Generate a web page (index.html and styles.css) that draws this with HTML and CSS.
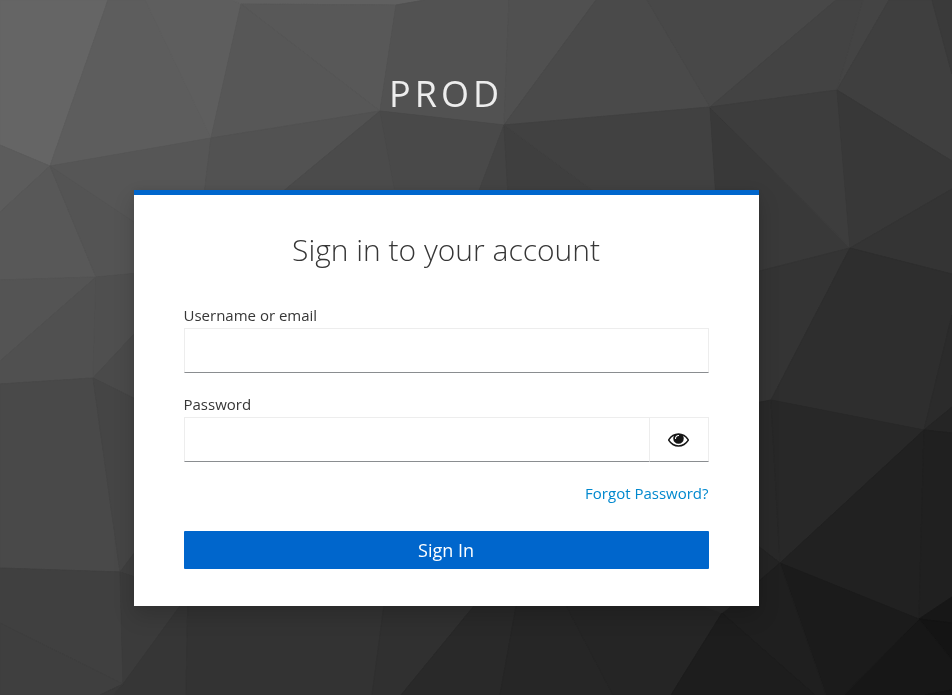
FILE: index.html
```html
<!DOCTYPE html>
<html lang="en">
<head>
<meta charset="utf-8">
<title>Sign in to PROD</title>
<meta name="viewport" content="width=device-width, initial-scale=1">
<link rel="stylesheet" href="styles.css">
</head>
<body>
<svg class="backdrop" viewBox="0 0 952 695" preserveAspectRatio="xMidYMid slice" aria-hidden="true">
  <!-- top row -->
  <polygon color="#656565" points="0,0 108,0 50,166 0,145"/>
  <polygon color="#5d5d5d" points="108,0 145,0 211,138 50,166"/>
  <polygon color="#5e5e5e" points="145,0 232,0 241,4 211,138"/>
  <polygon color="#606060" points="232,0 425,0 396,5 241,4"/>
  <polygon color="#585858" points="241,4 396,5 380,111"/>
  <polygon color="#575757" points="241,4 380,111 211,138"/>
  <polygon color="#525252" points="396,5 425,0 509,0 504,125 380,111"/>
  <polygon color="#505050" points="509,0 596,0 504,125"/>
  <polygon color="#4a4a4a" points="596,0 647,0 710,107 504,125"/>
  <polygon color="#484848" points="647,0 836,0 710,107"/>
  <polygon color="#434343" points="836,0 863,0 837,90 710,107"/>
  <polygon color="#444444" points="863,0 889,0 837,90"/>
  <polygon color="#3f3f3f" points="889,0 932,0 952,74 952,161 837,90"/>
  <polygon color="#3a3a3a" points="932,0 952,0 952,74"/>
  <!-- behind the card's upper edge -->
  <polygon color="#565656" points="50,166 211,138 196,260 134,222"/>
  <polygon color="#525252" points="211,138 380,111 240,227 196,260"/>
  <polygon color="#4b4b4b" points="380,111 402,230 240,227"/>
  <polygon color="#494949" points="380,111 504,125 464,230 402,230"/>
  <polygon color="#434343" points="504,125 464,230 510,230"/>
  <polygon color="#3f3f3f" points="504,125 510,230 646,230"/>
  <polygon color="#414141" points="504,125 710,107 718,230 646,230"/>
  <polygon color="#393939" points="710,107 850,248 759,271 718,230"/>
  <polygon color="#3d3d3d" points="710,107 837,90 850,248"/>
  <polygon color="#383838" points="837,90 952,161 952,189 850,248"/>
  <!-- left side -->
  <polygon color="#5c5c5c" points="0,145 50,166 0,212"/>
  <polygon color="#585858" points="0,212 50,166 96,277 0,280"/>
  <polygon color="#545454" points="50,166 134,222 150,272 96,277"/>
  <polygon color="#545454" points="0,280 96,277 0,361"/>
  <polygon color="#505050" points="0,361 96,277 93,378 0,384"/>
  <polygon color="#4f4f4f" points="96,277 150,272 150,317 93,378"/>
  <polygon color="#4a4a4a" points="93,378 150,317 150,406"/>
  <polygon color="#494949" points="0,384 93,378 120,572 0,568"/>
  <polygon color="#454545" points="93,378 150,406 150,532 120,572"/>
  <polygon color="#3f3f3f" points="120,572 150,532 150,582"/>
  <polygon color="#404040" points="0,568 120,572 123,684 0,623"/>
  <polygon color="#3f3f3f" points="0,623 123,684 100,695 0,695"/>
  <polygon color="#3b3b3b" points="120,572 150,582 195,585 123,684"/>
  <polygon color="#363636" points="123,684 188,595 186,695 113,695"/>
  <polygon color="#393939" points="123,684 113,695 100,695"/>
  <!-- right side -->
  <polygon color="#343434" points="850,248 952,189 952,274"/>
  <polygon color="#343434" points="740,276 850,248 771,400 740,406"/>
  <polygon color="#2e2e2e" points="850,248 952,274 952,315 924,430 771,400"/>
  <polygon color="#2b2b2b" points="952,315 952,407 924,430"/>
  <polygon color="#252525" points="924,430 952,407 952,433"/>
  <polygon color="#292929" points="740,406 771,400 780,563 740,532"/>
  <polygon color="#282828" points="771,400 924,430 780,563"/>
  <polygon color="#212121" points="924,430 919,619 780,563"/>
  <polygon color="#202020" points="924,430 952,433 952,597 919,619"/>
  <polygon color="#242424" points="740,532 780,563 740,597"/>
  <polygon color="#171717" points="919,619 952,597 952,623"/>
  <polygon color="#141414" points="919,619 952,623 952,660"/>
  <polygon color="#171717" points="919,619 952,660 952,690 925,695 844,695"/>
  <polygon color="#141414" points="952,690 952,695 925,695"/>
  <polygon color="#1b1b1b" points="780,563 919,619 844,695 826,695"/>
  <polygon color="#1f1f1f" points="780,563 826,695 815,695 722,613"/>
  <!-- bottom edge -->
  <polygon color="#333333" points="188,590 386,590 372,695 186,695"/>
  <polygon color="#303030" points="386,590 487,590 401,695 372,695"/>
  <polygon color="#292929" points="487,590 519,590 500,695 401,695"/>
  <polygon color="#262626" points="519,590 558,590 613,695 500,695"/>
  <polygon color="#252525" points="558,590 660,590 722,613 671,695 613,695"/>
  <polygon color="#292929" points="660,590 749,590 722,613"/>
  <polygon color="#1d1d1d" points="722,613 815,695 671,695"/>
</svg>

<div class="page">
  <header class="brand">PROD</header>
  <main class="card">
    <h1 class="title">Sign in to your account</h1>
    <form class="form">
      <div class="field">
        <label class="label" for="username">Username or email</label>
        <input class="input" id="username" name="username" type="text" autocomplete="username">
      </div>
      <div class="field">
        <label class="label" for="password">Password</label>
        <div class="input-group">
          <input class="input" id="password" name="password" type="password" autocomplete="current-password">
          <button class="reveal" type="button" aria-label="Show password">
            <svg class="eye" viewBox="0 128 1792 1152" aria-hidden="true">
              <path fill-rule="evenodd" d="M1664 704Q1512 468 1283 351Q1344 455 1344 576Q1344 761 1212.500 892.500T896 1024T579.500 892.500T448 576Q448 455 509 351Q280 468 128 704Q261 909 461.500 1030.500T896 1152T1330.500 1030.500T1664 704ZM944 320Q944 300 930 286T896 272Q771 272 681.500 361.500T592 576Q592 596 606 610T640 624T674 610T688 576Q688 490 749 429T896 368Q916 368 930 354T944 320ZM1792 704Q1792 738 1772 773Q1632 1003 1395.500 1141.500T896 1280T396.500 1141.500T20 773Q0 738 0 704T20 635Q160 405 396.500 266.500T896 128T1395.500 266.500T1772 635Q1792 670 1792 704Z"/>
            </svg>
          </button>
        </div>
      </div>
      <a class="forgot" href="#">Forgot Password?</a>
      <button class="submit" type="submit">Sign In</button>
    </form>
  </main>
</div>
</body>
</html>
```
FILE: styles.css
```css
* {
  box-sizing: border-box;
}

body {
  margin: 0;
  background: #333;
  color: #363636;
  font-family: "Open Sans", "Noto Sans", sans-serif;
  font-size: 15px;
  line-height: 20px;
}

.backdrop {
  position: fixed;
  inset: 0;
  z-index: -1;
  width: 100%;
  height: 100%;
}

.backdrop polygon {
  fill: currentColor;
  stroke: currentColor;
  stroke-width: 1;
  stroke-linejoin: round;
}

.page {
  display: flex;
  flex-direction: column;
  align-items: center;
  padding: 0 60px 40px 0;
}

.brand {
  padding: 69px 0 71px;
  color: #ededed;
  font-size: 36px;
  line-height: 50px;
  letter-spacing: 4px;
}

.card {
  width: 100%;
  max-width: 625px;
  padding: 35px 50px 37px;
  border-top: 5px solid #06c;
  background: #fff;
  box-shadow: 0 10px 20px rgba(3, 3, 3, 0.16), 0 0 8px rgba(3, 3, 3, 0.08);
}

.title {
  margin: 0 0 35px;
  font-size: 30px;
  font-weight: 300;
  line-height: 40px;
  text-align: center;
}

.form {
  display: flex;
  flex-direction: column;
}

.field {
  display: flex;
  flex-direction: column;
  gap: 3px;
  margin-bottom: 21px;
}

.label {
  align-self: flex-start;
}

.input,
.reveal {
  height: 45px;
  border: 1px solid #ededed;
  border-bottom-color: #8a8d90;
  border-radius: 0;
  background: #fff;
}

.input {
  width: 100%;
  min-width: 0;
  padding: 0 10px;
  color: #151515;
  font: inherit;
}

.input-group {
  display: flex;
}

.input-group .input {
  flex: 1;
  border-right: 0;
}

.reveal {
  display: flex;
  flex: 0 0 60px;
  align-items: center;
  justify-content: center;
  padding: 0;
  cursor: pointer;
}

.eye {
  width: 21px;
  height: 14px;
  fill: #151515;
}

.forgot {
  align-self: flex-end;
  margin-bottom: 28px;
  color: #0088ce;
  text-decoration: none;
}

.submit {
  height: 38px;
  padding: 0 10px;
  border: 0;
  border-radius: 1px;
  background: #06c;
  color: #fff;
  font-family: inherit;
  font-size: 18px;
  line-height: 24px;
  cursor: pointer;
}
```
